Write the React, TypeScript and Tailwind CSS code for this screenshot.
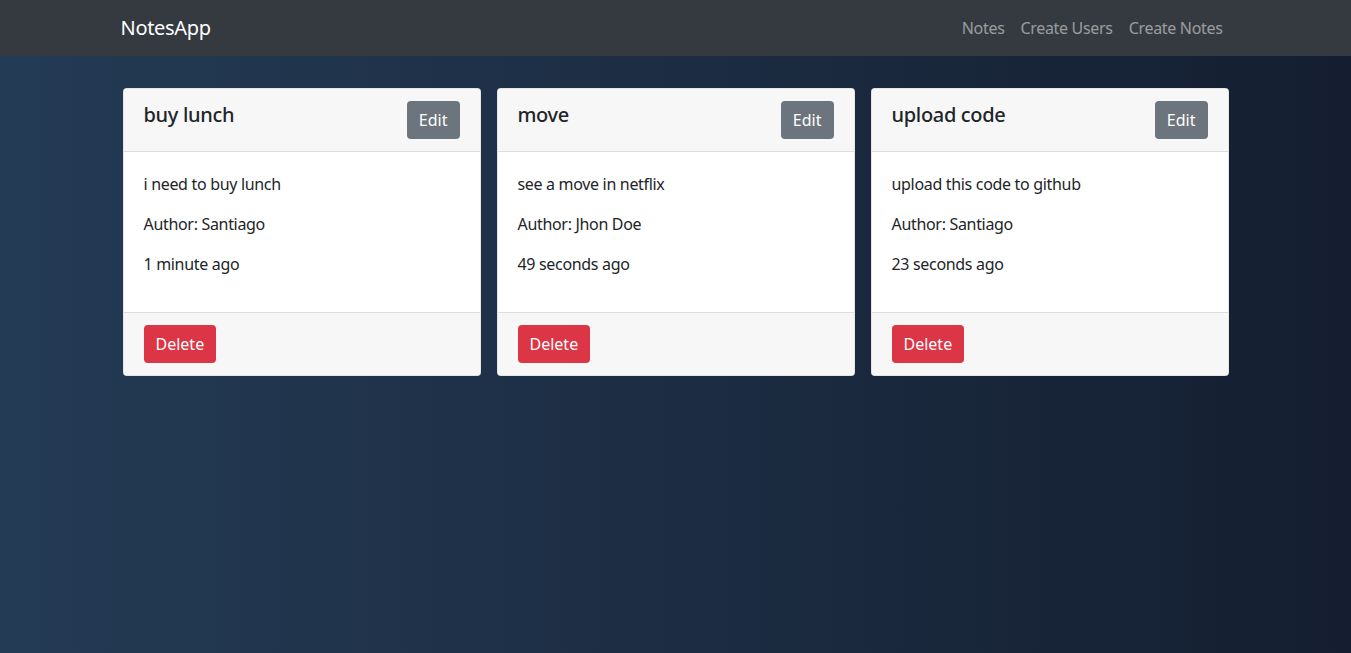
import React from "react";

const notes = [
  { id: 1, title: "buy lunch", content: "i need to buy lunch", author: "Santiago", date: "1 minute ago" },
  { id: 2, title: "move", content: "see a move in netflix", author: "Jhon Doe", date: "49 seconds ago" },
  { id: 3, title: "upload code", content: "upload this code to github", author: "Santiago", date: "23 seconds ago" },
];

export default function App() {
  return (
    <div
      className="min-h-screen bg-[linear-gradient(to_right,#243b55,#141e30)] tracking-[-0.02em] text-[#212529]"
      style={{ fontFamily: '"Noto Sans", "Open Sans", sans-serif' }}
    >
      <nav className="h-14 bg-[#343a40]">
        <div className="mx-auto flex h-full w-[1110px] items-center justify-between">
          <a href="#" className="text-xl leading-[30px] text-white">
            NotesApp
          </a>
          <ul className="flex">
            <li>
              <a href="#" className="px-2 text-base text-white/50">Notes</a>
            </li>
            <li>
              <a href="#" className="px-2 text-base text-white/50">Create Users</a>
            </li>
            <li>
              <a href="#" className="px-2 text-base text-white/50">Create Notes</a>
            </li>
          </ul>
        </div>
      </nav>

      <div className="mx-auto grid w-[1106px] grid-cols-3 gap-4 pt-8">
        {notes.map((note) => (
          <div key={note.id} className="flex flex-col rounded border border-black/10 bg-white">
            <div className="flex items-start justify-between rounded-t border-b border-black/10 bg-[#f7f7f7] px-5 py-3">
              <h5 className="mt-[2px] text-xl font-medium leading-6">{note.title}</h5>
              <button className="h-[38px] rounded bg-[#6c757d] px-3 text-base tracking-normal text-white">Edit</button>
            </div>

            <div className="p-5 text-base leading-6">
              <p className="mb-4">{note.content}</p>
              <p className="mb-4">Author: {note.author}</p>
              <p className="mb-4">{note.date}</p>
            </div>

            <div className="rounded-b border-t border-black/10 bg-[#f7f7f7] px-5 py-3">
              <button className="h-[38px] rounded bg-[#dc3545] px-3 text-base tracking-normal text-white">Delete</button>
            </div>
          </div>
        ))}
      </div>
    </div>
  );
}
